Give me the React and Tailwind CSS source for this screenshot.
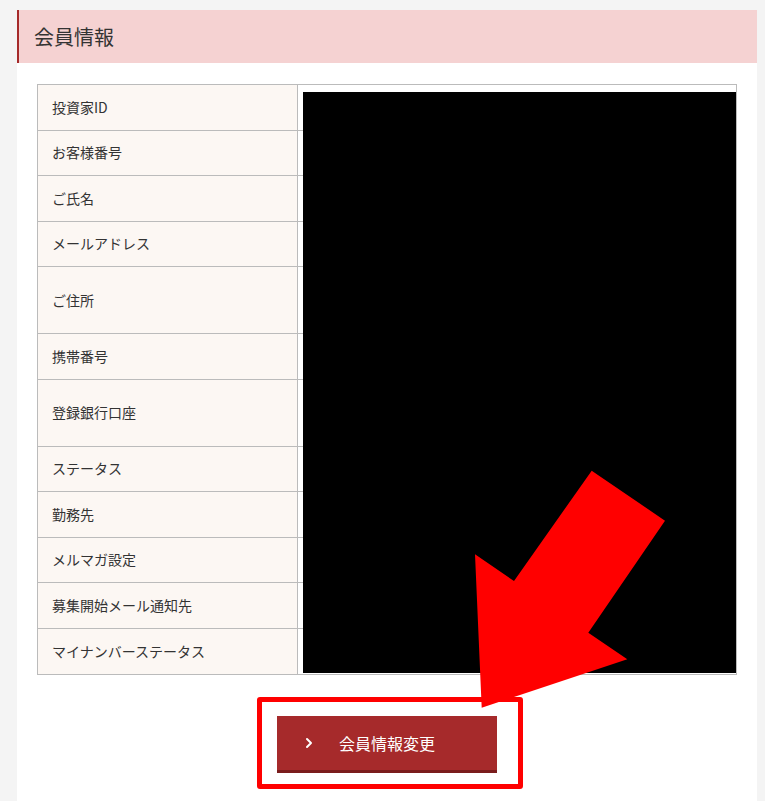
import { ChevronRight } from "lucide-react"

const rows = [
  { label: "投資家ID" },
  { label: "お客様番号" },
  { label: "ご氏名" },
  { label: "メールアドレス" },
  { label: "ご住所", tall: true },
  { label: "携帯番号" },
  { label: "登録銀行口座", tall: true },
  { label: "ステータス" },
  { label: "勤務先" },
  { label: "メルマガ設定" },
  { label: "募集開始メール通知先" },
  { label: "マイナンバーステータス" },
]

export default function App() {
  return (
    <div
      className="relative min-h-screen bg-[#f4f4f4] pt-[10px] pl-[17px] pr-[8px] text-[#333]"
      style={{ fontFamily: '"Noto Sans CJK JP", "Noto Sans", sans-serif' }}
    >
      <div className="min-h-[791px] w-[740px] bg-white">
        {/* heading */}
        <div className="flex h-[53px] items-center border-l-2 border-[#a52a2a] bg-[#f5d2d2] pl-[15px]">
          <h2 className="text-[20px] leading-none text-[#333]">会員情報</h2>
        </div>

        {/* member table */}
        <div className="relative mx-[20px] mt-[21px] border border-[#bbb]">
          {rows.map((row, i) => (
            <div
              key={row.label}
              className={`flex ${i < rows.length - 1 ? "border-b border-[#bbb]" : ""} ${
                row.tall ? "h-[67px]" : "h-[45.5px]"
              }`}
            >
              <div className="flex w-[260px] items-center border-r border-[#bbb] bg-[#fcf7f3] pl-[14px] text-[14px]">
                {row.label}
              </div>
              <div className="flex-1 bg-white" />
            </div>
          ))}
          {/* redacted values */}
          <div className="absolute top-[7px] right-0 bottom-[1px] left-[265px] bg-black" />
        </div>

        <div className="flex justify-center pt-[41px]">
          <button className="relative flex h-[57px] w-[220px] items-center justify-center border-b-[3px] border-[#7a1d1d] bg-[#a62a2b] text-[16px] text-white">
            <ChevronRight className="absolute left-[24px] h-4 w-4" strokeWidth={3} />
            会員情報変更
          </button>
        </div>
      </div>

      {/* annotation: outline around button */}
      <div className="pointer-events-none absolute top-[697px] left-[257px] h-[92px] w-[266px] rounded-[3px] border-[5px] border-[#ff0000]" />

      {/* annotation: arrow */}
      <svg
        className="pointer-events-none absolute top-0 left-0"
        width="765"
        height="801"
        viewBox="0 0 765 801"
      >
        <polygon
          points="591.7,470.7 665,520.7 588.3,632.7 627.3,659.3 481.7,707.7 475,554.3 514,581"
          fill="#ff0000"
        />
      </svg>
    </div>
  )
}
